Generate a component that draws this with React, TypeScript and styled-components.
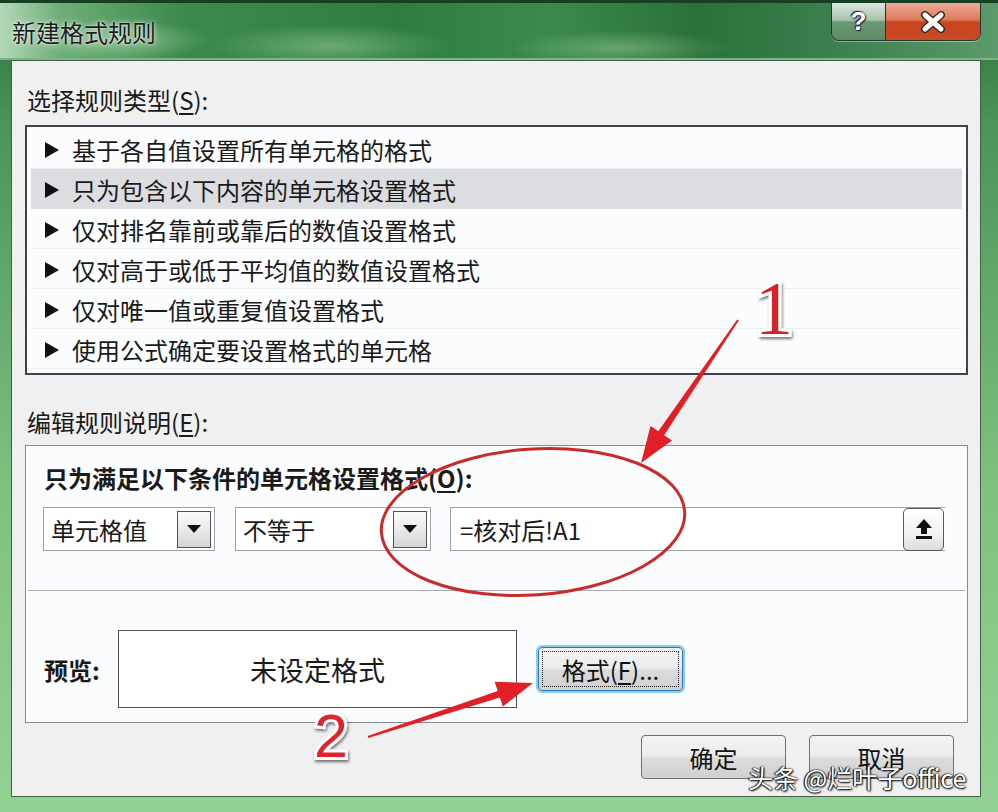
import React from 'react';
import styled, { createGlobalStyle } from 'styled-components';

const Global = createGlobalStyle`
  html, body { margin: 0; padding: 0; background: #1d4a2a; }
  body { font-family: "Noto Sans CJK SC", "Noto Sans", sans-serif; color: #1a1a1a; }
  #root { width: 998px; height: 812px; }
`;

const Window = styled.div`
  position: relative;
  width: 998px;
  height: 812px;
  box-sizing: border-box;
  display: flex;
  flex-direction: column;
  overflow: hidden;
  background: linear-gradient(180deg, #2c6e3b 0%, #4a9457 15%, #7fc17f 60%, #93d293 100%);
`;

const TitleBar = styled.div`
  height: 60px;
  box-sizing: border-box;
  display: flex;
  align-items: flex-start;
  padding: 0 17px 0 12px;
  box-shadow: inset 0 3px 0 #173f22, inset 0 -2px 0 #7db487;
  background:
    radial-gradient(ellipse 120px 22px at 330px 46px, rgba(150, 205, 150, 0.55), transparent),
    radial-gradient(ellipse 110px 18px at 620px 48px, rgba(150, 205, 150, 0.5), transparent),
    radial-gradient(ellipse 90px 20px at 120px 40px, rgba(190, 225, 190, 0.5), transparent),
    linear-gradient(90deg, #b4d8b8 0%, #6fae78 6%, #3d8a4c 18%, #2f7d40 40%, #3b8a4b 55%, #2a7039 70%, #3d8250 85%, #5c9a6a 100%);
`;

const Title = styled.div`
  font-size: 24px;
  line-height: 60px;
  padding-top: 2px;
  color: #1c1c1c;
  text-shadow: 0 0 6px rgba(255, 255, 255, 0.8), 0 0 2px rgba(255, 255, 255, 0.9);
`;

const CaptionButtons = styled.div`
  margin-left: auto;
  margin-top: 3px;
  display: flex;
  border: 1px solid #24382a;
  border-top: none;
  border-radius: 0 0 8px 8px;
  overflow: hidden;
  box-shadow: 0 1px 0 rgba(255, 255, 255, 0.4);
`;

const CaptionButton = styled.div<{ $kind: 'help' | 'close' }>`
  width: ${(p) => (p.$kind === 'help' ? '53px' : '95px')};
  height: 37px;
  display: flex;
  align-items: center;
  justify-content: center;
  box-sizing: border-box;
  border-left: ${(p) => (p.$kind === 'close' ? '1px solid #3a2a22' : 'none')};
  background: ${(p) =>
    p.$kind === 'help'
      ? 'linear-gradient(180deg, #dce8de 0%, #a9c4ae 45%, #6b9874 52%, #5c8c66 100%)'
      : 'linear-gradient(180deg, #eeaa96 0%, #de7a5c 45%, #c8441f 52%, #c94a25 100%)'};
  color: #fff;
  font-family: "Liberation Sans", sans-serif;
  font-weight: bold;
  font-size: 26px;
  text-shadow: 0 0 2px #223, 1px 1px 1px #223, -1px -1px 1px #223;
`;

const Client = styled.div`
  flex: 1;
  margin: 0 17px 15px 11px;
  display: flex;
  flex-direction: column;
  background: #f0f0f0;
  border: 1px solid #40604a;
  padding: 24px 12px 17px 13px;
`;

const SectionLabel = styled.div<{ $gap?: number }>`
  font-size: 24px;
  line-height: 30px;
  padding-left: 2px;
  margin-top: ${(p) => p.$gap ?? 0}px;
`;

const Key = styled.u`
  text-underline-offset: 3px;
`;

const ListBox = styled.div`
  margin-top: 10px;
  height: 250px;
  box-sizing: border-box;
  border: 2px solid #3d4450;
  background: #fbfcfd;
  padding: 2px 4px 4px;
  display: flex;
  flex-direction: column;
`;

const ListRow = styled.div<{ $selected?: boolean }>`
  height: 40px;
  box-sizing: border-box;
  display: flex;
  align-items: center;
  gap: 13px;
  padding: 2px 0 0 14px;
  font-size: 24px;
  background: ${(p) => (p.$selected ? '#dcdde1' : 'transparent')};
  border-bottom: 1px solid ${(p) => (p.$selected ? '#dcdde1' : '#eceef1')};
`;

const Triangle = styled.span`
  width: 0;
  height: 0;
  border-top: 8px solid transparent;
  border-bottom: 8px solid transparent;
  border-left: 14px solid #111;
`;

const EditBox = styled.div`
  margin-top: 8px;
  height: 278px;
  box-sizing: border-box;
  border: 1px solid #858b93;
  background: #fbfcfd;
  padding-top: 17px;
  display: flex;
  flex-direction: column;
`;

const BoldTitle = styled.div`
  font-size: 24px;
  line-height: 30px;
  font-weight: bold;
  padding-left: 18px;
`;

const ControlsRow = styled.div`
  margin-top: 14px;
  padding-left: 17px;
  height: 44px;
  display: flex;
  gap: 20px;
`;

const Dropdown = styled.div<{ $w: number }>`
  width: ${(p) => p.$w}px;
  height: 44px;
  box-sizing: border-box;
  border: 1px solid #9da2a9;
  background: #fff;
  display: flex;
  align-items: center;
  justify-content: space-between;
  padding: 0 3px 0 7px;
  font-size: 24px;
`;

const DropButton = styled.div`
  width: 34px;
  height: 37px;
  box-sizing: border-box;
  border: 1px solid #4e5256;
  background: linear-gradient(180deg, #fafafa 0%, #ececec 45%, #d4d4d4 100%);
  display: flex;
  align-items: center;
  justify-content: center;
`;

const FormulaInput = styled.div`
  margin-left: -1px;
  width: 495px;
  height: 44px;
  box-sizing: border-box;
  border: 1px solid #9da2a9;
  border-right: none;
  background: #fff;
  display: flex;
  align-items: center;
  justify-content: space-between;
  padding-left: 9px;
  font-size: 24px;
`;

const UploadButton = styled.div`
  width: 41px;
  height: 43px;
  box-sizing: border-box;
  border: 1px solid #55595e;
  border-radius: 5px;
  background: linear-gradient(180deg, #ffffff 0%, #f2f2f2 60%, #dcdcdc 100%);
  display: flex;
  align-items: center;
  justify-content: center;
  margin-right: 1px;
`;

const Divider = styled.div`
  margin: 39px 2px 0;
  height: 1px;
  background: #a9adb3;
`;

const PreviewRow = styled.div`
  margin-top: 39px;
  padding-left: 18px;
  display: flex;
  align-items: center;
`;

const PreviewLabel = styled.div`
  width: 74px;
  font-size: 24px;
  font-weight: bold;
`;

const PreviewBox = styled.div`
  width: 399px;
  height: 78px;
  box-sizing: border-box;
  border: 1px solid #4e5358;
  background: #fff;
  display: flex;
  align-items: center;
  justify-content: center;
  font-size: 27px;
`;

const PushButton = styled.div<{ $focused?: boolean }>`
  position: relative;
  width: 145px;
  height: 44px;
  box-sizing: border-box;
  border-radius: 4px;
  border: 1px solid ${(p) => (p.$focused ? '#2f79b0' : '#707070')};
  box-shadow: ${(p) => (p.$focused ? '0 0 0 2px #8bcdf0' : 'none')};
  background: linear-gradient(180deg, #f4f4f4 0%, #ececec 48%, #dcdcdc 52%, #d0d0d0 100%);
  display: flex;
  align-items: center;
  justify-content: center;
  font-size: 24px;
  color: #111;
  &::after {
    content: '';
    display: ${(p) => (p.$focused ? 'block' : 'none')};
    position: absolute;
    inset: 3px;
    border: 1px dotted #222;
  }
`;

const FormatButton = styled(PushButton)`
  margin-left: 21px;
`;

const ButtonRow = styled.div`
  margin-top: 12px;
  padding-right: 14px;
  display: flex;
  justify-content: flex-end;
  gap: 23px;
`;

const Overlay = styled.svg`
  position: absolute;
  left: 0;
  top: 0;
  width: 998px;
  height: 812px;
  pointer-events: none;
`;

const Watermark = styled.div`
  position: absolute;
  left: 748px;
  top: 761px;
  font-size: 25px;
  line-height: 32px;
  color: #fff;
  white-space: nowrap;
  text-shadow: 0 0 2px #000, 1px 1px 2px #000, -1px 0 1px #000;
`;

function arrowPoints(
  tx: number, ty: number, hx: number, hy: number,
  headLen: number, headHalf: number, tailW: number, neckW: number
): string {
  const dx = hx - tx;
  const dy = hy - ty;
  const len = Math.hypot(dx, dy);
  const ux = dx / len;
  const uy = dy / len;
  const px = -uy;
  const py = ux;
  const bx = hx - ux * headLen;
  const by = hy - uy * headLen;
  const pts: [number, number][] = [
    [tx + px * tailW, ty + py * tailW],
    [bx + px * neckW, by + py * neckW],
    [bx + px * headHalf, by + py * headHalf],
    [hx, hy],
    [bx - px * headHalf, by - py * headHalf],
    [bx - px * neckW, by - py * neckW],
    [tx - px * tailW, ty - py * tailW],
  ];
  return pts.map((p) => `${p[0].toFixed(1)},${p[1].toFixed(1)}`).join(' ');
}

const rules = [
  '基于各自值设置所有单元格的格式',
  '只为包含以下内容的单元格设置格式',
  '仅对排名靠前或靠后的数值设置格式',
  '仅对高于或低于平均值的数值设置格式',
  '仅对唯一值或重复值设置格式',
  '使用公式确定要设置格式的单元格',
];

const DownArrow = () => (
  <svg width="14" height="8" viewBox="0 0 14 8">
    <polygon points="0,0 14,0 7,8" fill="#111" />
  </svg>
);

const UpIcon = () => (
  <svg width="22" height="24" viewBox="0 0 22 24">
    <polygon points="11,2 19,11 14,11 14,17 8,17 8,11 3,11" fill="#111" />
    <rect x="3" y="19" width="16" height="3" fill="#111" />
  </svg>
);

const CloseIcon = () => (
  <svg width="26" height="22" viewBox="0 0 26 22">
    <g strokeLinecap="round">
      <line x1="5" y1="4" x2="21" y2="18" stroke="#3a2a26" strokeWidth="8" />
      <line x1="21" y1="4" x2="5" y2="18" stroke="#3a2a26" strokeWidth="8" />
      <line x1="5" y1="4" x2="21" y2="18" stroke="#fff" strokeWidth="5" />
      <line x1="21" y1="4" x2="5" y2="18" stroke="#fff" strokeWidth="5" />
    </g>
  </svg>
);

export default function App() {
  return (
    <>
      <Global />
      <Window>
        <TitleBar>
          <Title>新建格式规则</Title>
          <CaptionButtons>
            <CaptionButton $kind="help">?</CaptionButton>
            <CaptionButton $kind="close">
              <CloseIcon />
            </CaptionButton>
          </CaptionButtons>
        </TitleBar>
        <Client>
          <SectionLabel>
            选择规则类型(<Key>S</Key>):
          </SectionLabel>
          <ListBox>
            {rules.map((r, i) => (
              <ListRow key={r} $selected={i === 1}>
                <Triangle />
                <span>{r}</span>
              </ListRow>
            ))}
          </ListBox>
          <SectionLabel $gap={32}>
            编辑规则说明(<Key>E</Key>):
          </SectionLabel>
          <EditBox>
            <BoldTitle>
              只为满足以下条件的单元格设置格式(<Key>O</Key>):
            </BoldTitle>
            <ControlsRow>
              <Dropdown $w={172}>
                <span>单元格值</span>
                <DropButton>
                  <DownArrow />
                </DropButton>
              </Dropdown>
              <Dropdown $w={196}>
                <span>不等于</span>
                <DropButton>
                  <DownArrow />
                </DropButton>
              </Dropdown>
              <FormulaInput>
                <span>=核对后!A1</span>
                <UploadButton>
                  <UpIcon />
                </UploadButton>
              </FormulaInput>
            </ControlsRow>
            <Divider />
            <PreviewRow>
              <PreviewLabel>预览:</PreviewLabel>
              <PreviewBox>未设定格式</PreviewBox>
              <FormatButton $focused>
                格式(<Key>F</Key>)...
              </FormatButton>
            </PreviewRow>
          </EditBox>
          <ButtonRow>
            <PushButton>确定</PushButton>
            <PushButton>取消</PushButton>
          </ButtonRow>
        </Client>

        <Overlay viewBox="0 0 998 812">
          <defs>
            <filter id="sh" x="-20%" y="-20%" width="140%" height="140%">
              <feDropShadow dx="1" dy="2" stdDeviation="1.5" floodColor="#000" floodOpacity="0.55" />
            </filter>
          </defs>
          <ellipse
            cx="533"
            cy="522"
            rx="152"
            ry="73"
            transform="rotate(-4 533 522)"
            fill="none"
            stroke="#c92a2a"
            strokeWidth="3"
          />
          <polygon points={arrowPoints(738, 320, 641, 463, 36, 13, 1, 3.5)} fill="#e11f26" />
          <polygon points={arrowPoints(368, 737, 533, 683, 36, 13, 1, 3.5)} fill="#e11f26" />
          <text
            x="774"
            y="334"
            textAnchor="middle"
            fontFamily="'Liberation Serif', serif"
            fontSize="76"
            fill="#d4202a"
            stroke="#fff"
            strokeWidth="6"
            paintOrder="stroke"
            filter="url(#sh)"
          >
            1
          </text>
          <text
            x="331"
            y="757"
            textAnchor="middle"
            fontFamily="'Liberation Sans', sans-serif"
            fontSize="61"
            fill="#e0242c"
            stroke="#fff"
            strokeWidth="6"
            paintOrder="stroke"
            filter="url(#sh)"
          >
            2
          </text>
        </Overlay>
        <Watermark>头条 @烂叶子office</Watermark>
      </Window>
    </>
  );
}
